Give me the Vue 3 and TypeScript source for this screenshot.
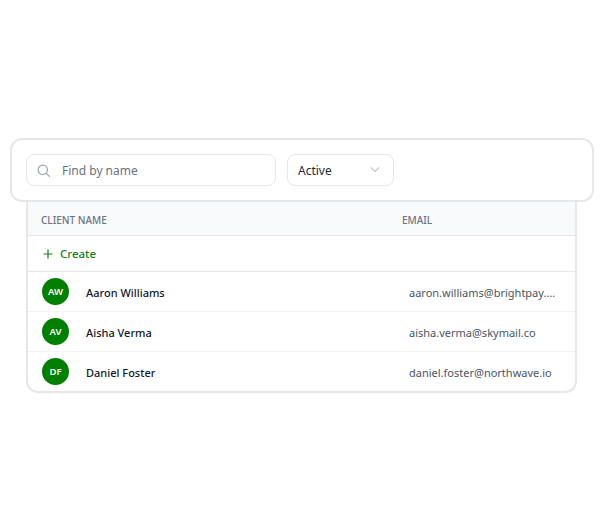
<script setup lang="ts">
interface Client { initials: string; name: string; email: string }
const clients: Client[] = [
  { initials: 'AW', name: 'Aaron Williams', email: 'aaron.williams@brightpay.com' },
  { initials: 'AV', name: 'Aisha Verma', email: 'aisha.verma@skymail.co' },
  { initials: 'DF', name: 'Daniel Foster', email: 'daniel.foster@northwave.io' },
]
</script>

<template>
  <div class="page">
    <div class="wrap">
      <div class="toolbar">
        <label class="search">
          <svg class="search-icon" width="14" height="14" viewBox="0 0 14 14" fill="none" stroke="#9ca3af" stroke-width="1.2" stroke-linecap="round">
            <circle cx="5.8" cy="5.8" r="4.7" />
            <path d="M9.4 9.4l3 3" />
          </svg>
          <span class="placeholder">Find by name</span>
        </label>
        <div class="select">
          <span>Active</span>
          <svg width="12" height="12" viewBox="0 0 12 12" fill="none" stroke="#9ca3af" stroke-width="1" stroke-linecap="round" stroke-linejoin="round">
            <path d="M2 3.6l4 3.8 4-3.8" />
          </svg>
        </div>
      </div>
      <div class="table">
        <div class="head">
          <div class="col-name">CLIENT NAME</div>
          <div class="col-email">EMAIL</div>
        </div>
        <div class="create">
          <svg width="12" height="12" viewBox="0 0 12 12" fill="none" stroke="#15801a" stroke-width="1.2">
            <path d="M6 1.5v9M1.5 6h9" />
          </svg>
          <span>Create</span>
        </div>
        <div v-for="c in clients" :key="c.initials" class="client">
          <div class="avatar">{{ c.initials }}</div>
          <div class="name">{{ c.name }}</div>
          <div class="email">{{ c.email }}</div>
        </div>
      </div>
    </div>
  </div>
</template>

<style scoped>
.page {
  height: 531px;
  display: flex;
  align-items: center;
  justify-content: center;
  background: #fff;
  font-family: "Noto Sans", "Open Sans", sans-serif;
}
.wrap { width: 584px; }
.toolbar {
  box-sizing: border-box;
  height: 64px;
  border: 2px solid #e5e7eb;
  border-radius: 12px;
  padding: 14px;
  display: flex;
  gap: 11px;
  background: #fff;
}
.search {
  box-sizing: border-box;
  width: 250px;
  height: 32px;
  border: 1px solid #e5e7eb;
  border-radius: 8px;
  display: flex;
  align-items: center;
  padding-left: 10px;
  gap: 11px;
}
.search-icon { margin-top: 1px; }
.placeholder { font-size: 12px; color: #6b7280; margin-top: 1px; }
.select {
  box-sizing: border-box;
  width: 107px;
  height: 32px;
  border: 1px solid #e5e7eb;
  border-radius: 8px;
  display: flex;
  align-items: center;
  justify-content: space-between;
  padding: 0 12px 0 10px;
  font-size: 12px;
  color: #1f2937;
}
.table {
  box-sizing: border-box;
  width: 551px;
  margin-left: 16px;
  border: 2px solid #e5e7eb;
  border-top: 0;
  border-radius: 0 0 12px 12px;
  overflow: hidden;
}
.head {
  box-sizing: border-box;
  height: 34px;
  background: #f9fafb;
  border-bottom: 1px solid #e5e7eb;
  font-size: 10px;
  font-weight: 500;
  color: #6b7280;
  padding: 2px 0 0 13px;
  display: flex;
  align-items: center;
}
.col-name { width: 361px; }
.create {
  box-sizing: border-box;
  height: 36px;
  display: flex;
  align-items: center;
  gap: 6px;
  padding-left: 14px;
  font-size: 11.5px;
  font-weight: 500;
  color: #15801a;
  border-bottom: 1px solid #e5e7eb;
}
.client {
  box-sizing: border-box;
  height: 40px;
  display: flex;
  align-items: center;
  padding-left: 14px;
  border-bottom: 1px solid #f3f4f6;
}
.client:last-child { border-bottom: 0; height: 39px; }
.avatar {
  width: 27px;
  height: 27px;
  border-radius: 50%;
  background: #008000;
  color: #fff;
  font-size: 9.5px;
  font-weight: 600;
  display: flex;
  align-items: center;
  justify-content: center;
  flex: none;
}
.name {
  width: 323px;
  margin: 1px 0 0 17px;
  font-size: 11px;
  font-weight: 500;
  color: #111827;
}
.email {
  width: 147px;
  margin-top: 1px;
  font-size: 11px;
  color: #4b5563;
  white-space: nowrap;
  overflow: hidden;
  text-overflow: ellipsis;
}
</style>
